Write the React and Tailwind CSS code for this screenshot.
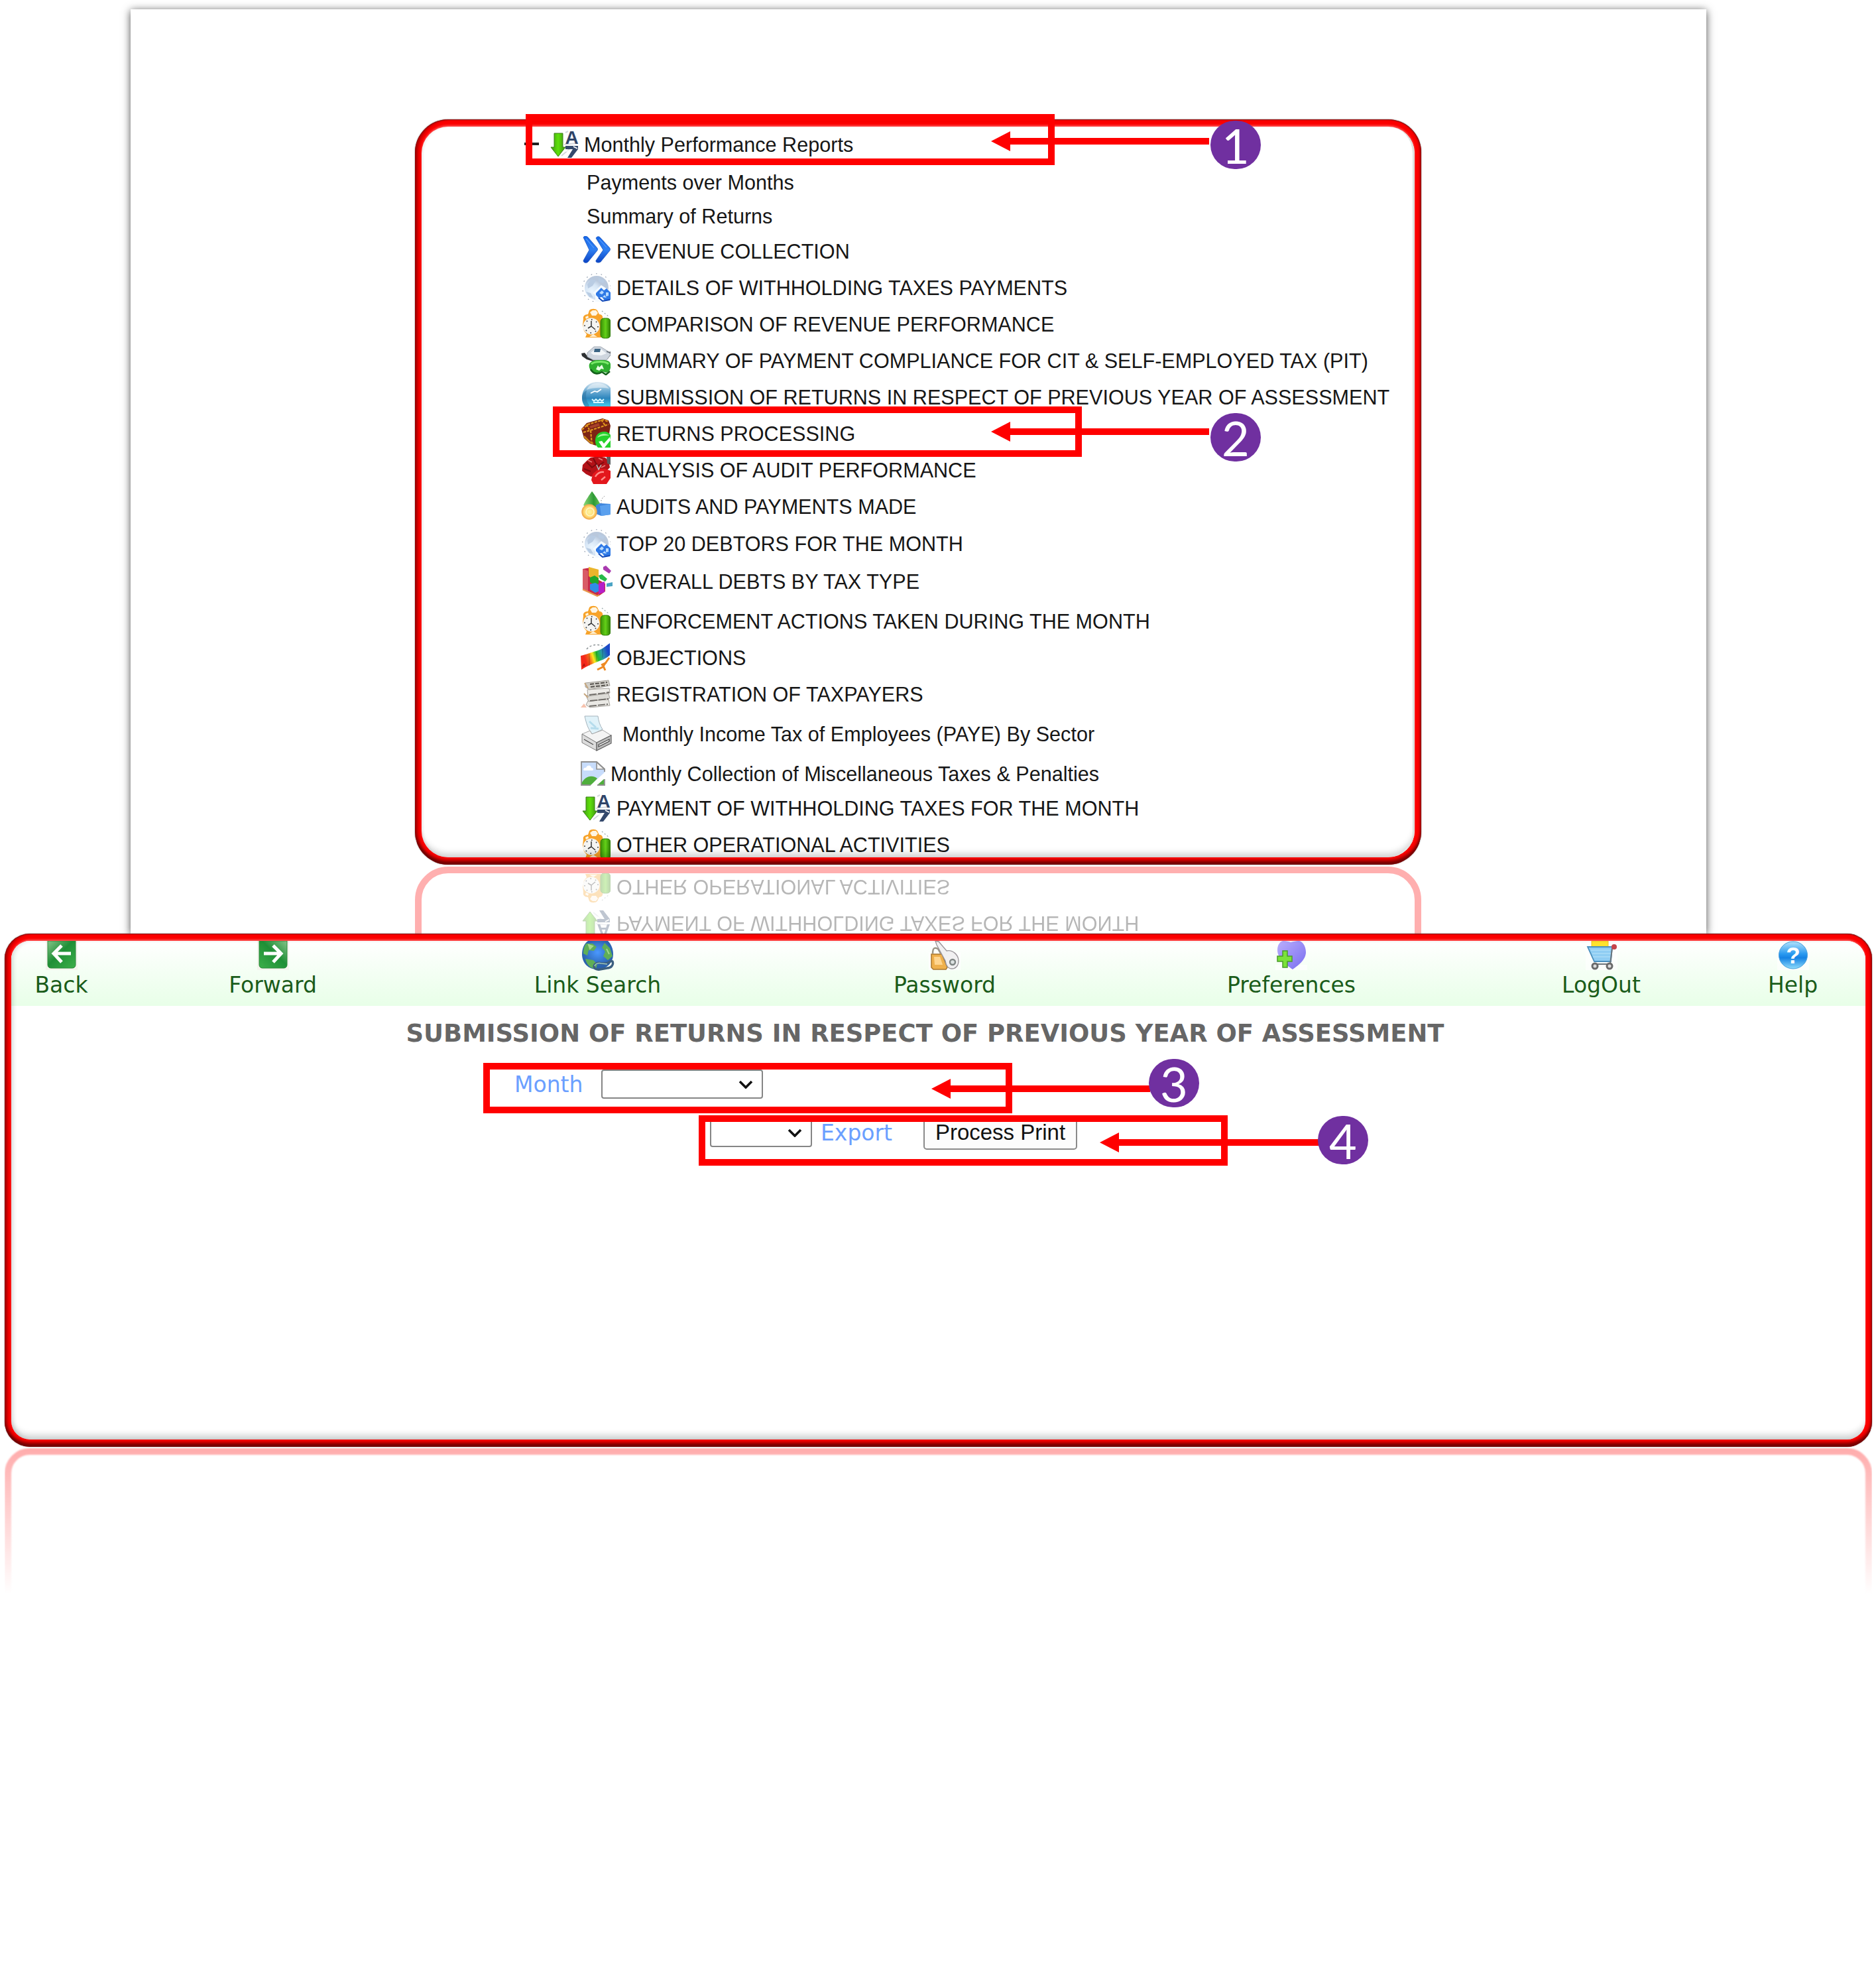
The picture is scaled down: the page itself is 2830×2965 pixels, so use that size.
import React from "react";

/* ---------- tree icons ---------- */

function SortIcon({ className = "w-11 h-11" }) {
  return (
    <svg viewBox="0 0 44 44" className={`overflow-visible ${className}`}>
      <defs>
        <linearGradient id="sortGreen" x1="0" x2="1">
          <stop offset="0" stopColor="#3f9a12" />
          <stop offset=".5" stopColor="#5fe00c" />
          <stop offset="1" stopColor="#3c8f10" />
        </linearGradient>
      </defs>
      <path d="M7 6h13v21h4L13 41 2 27h5z" fill="url(#sortGreen)" stroke="#3a7d1a" strokeWidth="1" />
      <path d="M22 23l18-2M18 40l14-12M24 5l4-2" stroke="#d5d8de" strokeWidth="2" fill="none" />
      <text x="23.5" y="22" fontSize="28" fontWeight="700" fontFamily="Liberation Sans, sans-serif" fill="#2f4468">A</text>
      <path d="M24 25h19v5L33 43h-6l8-13H24z" fill="#34496c" />
      <path d="M24 33l8-1M36 26l6 3" stroke="#fff" strokeWidth="1.5" />
    </svg>
  );
}

function ChevronsIcon() {
  return (
    <svg viewBox="0 0 44 44" className="w-11 h-11">
      <defs>
        <linearGradient id="chev" x1="0" y1="0" x2="0" y2="1">
          <stop offset="0" stopColor="#1667e8" />
          <stop offset=".5" stopColor="#2f80f2" />
          <stop offset="1" stopColor="#0b43c4" />
        </linearGradient>
      </defs>
      <g fill="url(#chev)" stroke="#1a55c0" strokeWidth=".8">
        <path d="M3 2c2-3 5-2 7 0l13 15c2 2 2 4 0 6L10 39c-2 2-7 2-7-2l9-16z" />
        <path d="M22 3c2-3 5-3 7 0l13 14c2 2 2 4 0 6L29 39c-3 2-8 1-7-2l11-16z" />
      </g>
      <path d="M7 4l12 14M27 5l11 12" stroke="#4b94fb" strokeWidth="1.5" fill="none" />
    </svg>
  );
}

function GlobeHomeIcon() {
  return (
    <svg viewBox="0 0 44 44" className="w-11 h-11">
      <defs>
        <radialGradient id="paleGlobe" cx=".3" cy=".65">
          <stop offset="0" stopColor="#eaf6ff" />
          <stop offset=".6" stopColor="#d6e5f5" />
          <stop offset="1" stopColor="#b9c8dc" />
        </radialGradient>
      </defs>
      <circle cx="23" cy="23" r="18" fill="url(#paleGlobe)" />
      <circle cx="23" cy="23" r="21.3" fill="none" stroke="#8794a6" strokeWidth="1.1" strokeDasharray="1.6 6" />
      <path d="M9 18l6-8 7 2-5 8-7 4zM26 8l9 4-2 4-7-2zM7 29l7 2 4 7-6-1z" fill="#b9cce3" />
      <path d="M17 31l13-12 14 9v16H21V34z" fill="#f4faff" />
      <path d="M22 31l8-8 4 4 4-3 6 6v11l-9 1-4-5-5 1-4-4z" fill="#2e79e6" />
      <path d="M27 31l4-4 3 3-3 3zM37 30l4 0 0 5-4 1zM32 37l3-3 3 4" fill="#b8dbff" />
      <path d="M26 38l6 5 11-2" stroke="#1249b8" strokeWidth="2" fill="none" />
    </svg>
  );
}

function ClockIcon() {
  return (
    <svg viewBox="0 0 44 46" className="w-11 h-[46px]">
      <defs>
        <linearGradient id="clockGreen" x1="0" x2="1">
          <stop offset="0" stopColor="#3a8f06" />
          <stop offset=".5" stopColor="#62d018" />
          <stop offset="1" stopColor="#2c7a04" />
        </linearGradient>
      </defs>
      <path d="M3 16c-1-4 2-7 7-7l2-6c3-3 9-3 12 0l3 6c4 0 6 3 5 7l-1 8 2 12-3 8H6l2-5-4-5-2-9z" fill="#f7a32a" />
      <path d="M13 6l4-3h5l3 4-3 4h-6zM6 13l4-2 1 3-4 2z" fill="#fff5e2" />
      <circle cx="15" cy="27" r="12.5" fill="#f4f4f2" />
      <circle cx="15" cy="27" r="10" fill="none" stroke="#444" strokeWidth="1.8" strokeDasharray="1.6 6.2" />
      <path d="M15 19v8l6 5M15 27l-5 3" stroke="#333" strokeWidth="1.5" fill="none" />
      <path d="M12 43l6-4 6 4z" fill="#fff0d2" />
      <rect x="29" y="15" width="15" height="30" rx="5" fill="url(#clockGreen)" stroke="#2f7d0a" strokeWidth="1" />
      <path d="M31 4l11 9" stroke="#9aa" strokeWidth="1.2" strokeDasharray="2 3" />
    </svg>
  );
}

function PhoneMoneyIcon() {
  return (
    <svg viewBox="0 0 44 46" className="w-11 h-[46px]">
      <path d="M0 13l5-1 4 5 12 6v3L8 22 1 17z" fill="#2e3133" />
      <path d="M40 12l4-2v6l-5 6z" fill="#4b5155" />
      <path d="M9 12L19 3h10l13 8 2 4-6 8H18L9 18z" fill="#cfd6df" stroke="#a0a8b2" strokeWidth="1" />
      <path d="M14 12l8-6 8 1 8 6-8 3-12-1z" fill="#f2f5f8" />
      <path d="M20 6h9l-1 5h-9z" fill="#3a6382" />
      <path d="M38 10l5 2" stroke="#666f78" strokeWidth="1.6" />
      <path d="M12 29c3-6 10-6 17-6s14 0 15 6c1 8-2 12-7 13l-6-2-7 4c-7-1-14-7-12-15z" fill="#2fae2f" />
      <path d="M15 29c5-4 20-5 26 0" stroke="#7bea6a" strokeWidth="3" fill="none" />
      <path d="M14 37c4 7 11 8 17 4l6 4 6-5" stroke="#14621b" strokeWidth="2.6" fill="none" />
      <path d="M22 37l3-6 2 3 4-4 3 7-4-1-3 3z" fill="#eaffe8" />
    </svg>
  );
}

function BlueOrbIcon() {
  return (
    <svg viewBox="0 0 44 46" className="w-11 h-[46px]">
      <defs>
        <linearGradient id="orb" x1="0" y1="0" x2="0" y2="1">
          <stop offset="0" stopColor="#dce9f3" />
          <stop offset=".3" stopColor="#6fadd4" />
          <stop offset=".55" stopColor="#2d86bd" />
          <stop offset=".85" stopColor="#45d4f2" />
        </linearGradient>
      </defs>
      <path d="M24 1c8 0 16 3 20 9v32c-5 4-12 4-19 4C12 46 1 38 1 25 1 11 11 1 24 1z" fill="url(#orb)" />
      <path d="M8 13C11 6 17 3 24 3s13 2 18 8c-8-2-26-2-34 2z" fill="#eef5fa" opacity=".55" />
      <path d="M1 24c0 8 3 14 8 18l3-6c-5-6-6-14-4-22-4 2-7 6-7 10z" fill="#2a6f9e" opacity=".5" />
      <path d="M14 18l6-3 4 1 6-4" stroke="#fff" strokeWidth="1.8" fill="none" />
      <path d="M16 27l3 3 3-3 3 3 3-3 3 3 3-3M18 32h16" stroke="#d8f7ff" strokeWidth="1.8" fill="none" />
    </svg>
  );
}

function ChestIcon() {
  return (
    <svg viewBox="0 0 44 46" className="w-11 h-[46px]">
      <path d="M0 17L8 8 32 1l9 3 3 8-2 12-20 18-9-3-9-8z" fill="#7d2414" />
      <path d="M1 18l9-8 23-7 8 3M3 22l14-4 24-8M14 19l2 22M8 10l4 8M30 3l6 9" stroke="#e0971e" strokeWidth="2.2" fill="none" strokeDasharray="4 1.6" />
      <path d="M12 13l14-5 2 4-14 4z" fill="#a8402a" />
      <path d="M4 28l8 8 6 3" stroke="#c9861c" strokeWidth="2.5" fill="none" />
      <path d="M21 34c0-8 6-13 13-13 5 0 8 2 10 5v19H25c-3-3-4-6-4-11z" fill="#25d12b" />
      <path d="M24 30c3-6 12-8 18-3-6-1-13 0-18 3z" fill="#a8f7a0" />
      <path d="M26 36l5-1 3 4 9-10 1 5-9 11h-3z" fill="#fff" />
    </svg>
  );
}

function RedIcon() {
  return (
    <svg viewBox="0 0 44 46" className="w-11 h-[46px]">
      <path d="M2 16l6-6 6-5 12-2 10 2 5 5 2 10-6 6-10 2-12 6-8-4-6-5z" fill="#b31218" />
      <path d="M38 4l6-4v16l-5-2z" fill="#5a5f60" />
      <path d="M8 12l8 8 8-6M18 6l6 12 10-6M4 22l10 4" stroke="#7d0b0f" strokeWidth="2" fill="none" />
      <path d="M10 9l6 3M26 6l6 3M30 20l6-3" stroke="#e87d7a" strokeWidth="1.6" />
      <path d="M17 30l9-8h10l8 3v11l-6 9H18l-3-6z" fill="#e3171c" />
      <path d="M21 34c3-5 8-8 13-7M30 39l6-5" stroke="#ff8f8a" strokeWidth="2.4" fill="none" />
      <path d="M23 16l3 7 4-7" stroke="#b9bfbd" strokeWidth="1.5" fill="none" />
    </svg>
  );
}

function ShapesIcon() {
  return (
    <svg viewBox="0 0 44 46" className="w-11 h-[46px]">
      <defs>
        <linearGradient id="cone" x1="0" x2="1">
          <stop offset="0" stopColor="#8fd879" />
          <stop offset=".6" stopColor="#2d9a35" />
          <stop offset="1" stopColor="#6bc45a" />
        </linearGradient>
        <radialGradient id="ball">
          <stop offset="0" stopColor="#fff3a0" />
          <stop offset=".7" stopColor="#ffdb74" />
          <stop offset="1" stopColor="#f3b04e" />
        </radialGradient>
      </defs>
      <path d="M16 1c2 2 10 14 13 20-3 6-21 6-26 1C6 15 13 5 16 1z" fill="url(#cone)" />
      <path d="M22 22l6-3 16 1v16l-14 2-8-3z" fill="#3f86dd" />
      <path d="M28 23l16-3v16l-14 2z" fill="#5aa0ee" />
      <path d="M31 12l4-4M30 14v5" stroke="#999" strokeWidth="1" strokeDasharray="2 2" />
      <circle cx="12" cy="32" r="11" fill="url(#ball)" stroke="#f1ad52" strokeWidth="1.5" />
      <circle cx="13" cy="32" r="6" fill="none" stroke="#fff6c8" strokeWidth="1.5" />
    </svg>
  );
}

function CubeIcon() {
  return (
    <svg viewBox="0 0 48 48" className="w-12 h-12">
      <path d="M2 6l12-2v12l22 12v12l-10 7L2 36z" fill="#c92a48" />
      <path d="M2 6l8 3v32l-8-4z" fill="#d95b66" />
      <path d="M11 3l15 4v13l-8 2-7-5z" fill="#eab52c" />
      <path d="M13 19l7-3 6 4v8l-7 2-6-4z" fill="#1fa62b" />
      <path d="M13 29l8-2 7 4v8l-7 3-8-5z" fill="#2f8ce8" />
      <path d="M26 28l9-3v16l-9 3z" fill="#b61fc8" />
      <path d="M26 16l5-2 8 7-3 4-8-4z" fill="#27b84a" />
      <path d="M33 3l4-2 8 8-3 4-9-6z" fill="#a93aaf" />
      <path d="M38 28l9-2v6l-9 1z" fill="#4aa3c4" />
      <path d="M2 37l22 10 3-2" stroke="#e8984a" strokeWidth="2" fill="none" />
    </svg>
  );
}

function FlagIcon() {
  return (
    <svg viewBox="0 0 46 44" className="w-[46px] h-11 -ml-0.5">
      <defs>
        <linearGradient id="rainbow" x1="0" x2="1" y1=".3" y2="0">
          <stop offset=".05" stopColor="#f3281a" />
          <stop offset=".2" stopColor="#f5661a" />
          <stop offset=".33" stopColor="#ffe81c" />
          <stop offset=".47" stopColor="#22bd2c" />
          <stop offset=".64" stopColor="#2a9aa8" />
          <stop offset=".85" stopColor="#1c48c8" />
        </linearGradient>
      </defs>
      <path d="M10 10C16 3 26 2 34 5" stroke="#8d9496" strokeWidth="1.5" strokeDasharray="3 3" fill="none" />
      <path d="M1 20c9-2 15-5 23-7S38 6 45 1v18c-6 6-14 8-21 11S11 35 2 41z" fill="url(#rainbow)" />
      <path d="M14 17v18M25 14v14M34 10v13" stroke="#00000033" strokeWidth="1.4" />
      <path d="M44 23L34 37l-8 4M34 33l4 9M40 30l-8 4" stroke="#ee8a22" strokeWidth="3" fill="none" />
      <path d="M3 37l3-6 2 4" fill="#b3150c" />
    </svg>
  );
}

function PapersIcon() {
  return (
    <svg viewBox="0 0 46 44" className="w-[46px] h-11 -ml-0.5">
      <g stroke="#a5a29c" strokeWidth="1">
        <path d="M12 33l31-2 2 9-30 3-6-4z" fill="#e9e8e4" />
        <path d="M9 25l34-3 2 7-32 5z" fill="#dddcd7" />
        <path d="M11 16l33-2 1 7-33 5z" fill="#eeede9" />
        <path d="M8 6l35-4 2 8-31 6-6-4z" fill="#d2d0ca" />
      </g>
      <path d="M15 8l26-3M16 12l26-3" stroke="#55524d" strokeWidth="2" strokeDasharray="6 2" />
      <path d="M14 24l30-4M15 33l28-3M14 41l28-3" stroke="#6d6a66" strokeWidth="1.8" strokeDasharray="11 2" />
      <path d="M7 6l5 8M6 22l6 6" stroke="#c7a77e" strokeWidth="2" />
      <path d="M1 43l5-6 4 6z" fill="#f6c3ae" />
    </svg>
  );
}

function PrinterIcon() {
  return (
    <svg viewBox="0 0 48 54" className="w-12 h-[54px]">
      <path d="M5 1h20c1 8 3 14 7 20l-15 7C10 22 7 10 5 1z" fill="#e0f2f9" stroke="#a4b3bc" strokeWidth="1" />
      <path d="M12 9l10 9M14 19l12 1" stroke="#b5dcec" strokeWidth="3" />
      <path d="M1 28l12-5 3 5 16-6 13 8-22 11z" fill="#f4f4f4" stroke="#a5a5a5" strokeWidth="1" />
      <path d="M1 28l22 13v12L1 41z" fill="#dcdcdc" stroke="#808080" strokeWidth="1" />
      <path d="M45 30L23 41v12l22-11z" fill="#bdbdbd" stroke="#5c5c5c" strokeWidth="1.2" />
      <path d="M26 44l16-8v3l-16 8zM4 36l14 8" stroke="#4d4d4d" strokeWidth="1.3" fill="#f5f5f5" />
    </svg>
  );
}

function BrokenImageIcon() {
  return (
    <svg viewBox="0 0 37 37" className="w-[37px] h-[37px] -ml-px">
      <path d="M1 1h23l12 11v24H1z" fill="#c7dcfb" />
      <path d="M4 13c0-3 3-4 4-3 2-5 8-4 8 0 3 0 4 3 2 4H5z" fill="#fff" />
      <path d="M1 34c4-10 15-15 24-8l-9 10H1z" fill="#4fae3c" />
      <path d="M37 16L14 37h12l11-10z" fill="#fff" />
      <path d="M26 35l9-8v8z" fill="#4fae3c" />
      <path d="M24 1v11h12z" fill="#f4f4f4" stroke="#8f8f8f" strokeWidth="1.6" />
      <path d="M36 16v-4L24 1H1v35h14M25 36h11v-9" fill="none" stroke="#8f8f8f" strokeWidth="1.8" />
    </svg>
  );
}

/* ---------- toolbar icons ---------- */

function ArrowTile({ flip }) {
  return (
    <svg viewBox="0 0 48 44" className={flip ? "w-12 h-11 -scale-x-100" : "w-12 h-11"}>
      <defs>
        <linearGradient id="tile" x1="0" y1="0" x2="1" y2="1">
          <stop offset="0" stopColor="#86c48a" />
          <stop offset=".45" stopColor="#1f8f36" />
          <stop offset="1" stopColor="#3db04a" />
        </linearGradient>
      </defs>
      <path d="M0 0h48v44H0z" fill="#f3f1ea" opacity=".7" />
      <path d="M3 0h42v36c0 3-2 5-5 5H8c-3 0-5-2-5-5z" fill="url(#tile)" stroke="#2d8a3c" strokeWidth="1" />
      <path d="M38 19H14M24 7L12 19l12 13" fill="none" stroke="#fff" strokeWidth="5" />
    </svg>
  );
}

function EarthLinkIcon() {
  return (
    <svg viewBox="0 0 50 46" className="w-[50px] h-[46px]">
      <defs>
        <radialGradient id="earth" cx=".5" cy=".4">
          <stop offset="0" stopColor="#4a98ff" />
          <stop offset="1" stopColor="#2a62ad" />
        </radialGradient>
      </defs>
      <path d="M10 0h30c5 5 8 12 8 20 0 13-10 23-24 23S1 33 1 20C1 12 4 4 10 0z" fill="url(#earth)" />
      <path d="M7 4h10l6 5-4 6-8-1-2 8-6-3c0-6 1-11 4-15zM35 3l8 8 4 12-7 6-7-6 3-7-5-6zM6 27l12 2 6 6-2 7C14 42 8 36 6 27z" fill="#5fae57" />
      <path d="M11 6l6 2-4 4zM38 12l4 8" stroke="#a4d78c" strokeWidth="2" fill="#a4d78c" />
      <path d="M19 38c1-4 6-6 11-4h8c4-1 6-5 9-3 2 5-2 10-8 10l-11 2c-5 1-9-1-9-5z" fill="none" stroke="#3c5f80" strokeWidth="3.4" />
      <path d="M20 38c1-4 6-5 10-4l9 1" fill="none" stroke="#9cc6c0" strokeWidth="1.5" />
    </svg>
  );
}

function LockKeyIcon() {
  return (
    <svg viewBox="0 0 48 44" className="w-12 h-11">
      <path d="M0 17h48v27H0z" fill="#fff" opacity=".7" />
      <path d="M6 19c0-10 4-9 8-7l4 7" fill="none" stroke="#9b9587" strokeWidth="2.5" />
      <path d="M4 20h16l8 20-2 3H7l-3-3z" fill="#efb04c" stroke="#a9762d" strokeWidth="1.5" />
      <path d="M8 24h9l4 12H9z" fill="#ffd58e" />
      <path d="M10 0l5 1 12 14c9-2 18 6 18 15 0 8-5 12-10 12-7 0-9-6-10-12L12 6z" fill="#f1f0f1" stroke="#9c979c" strokeWidth="1.4" />
      <circle cx="36" cy="32" r="4" fill="#dde2e2" stroke="#7f8584" strokeWidth="2.4" />
    </svg>
  );
}

function HeartPlusIcon() {
  return (
    <svg viewBox="0 0 48 44" className="w-12 h-11">
      <defs>
        <linearGradient id="heart" x1="0" y1="0" x2="1" y2="1">
          <stop offset="0" stopColor="#b9aefc" />
          <stop offset="1" stopColor="#7a6df0" />
        </linearGradient>
      </defs>
      <path d="M0 36h48v8H0z" fill="#fff" opacity=".7" />
      <path d="M3 14C3 5 8 0 12 0c5 0 8 1 11 2 4-1 8-2 12-2 5 0 11 7 11 17 0 12-13 21-20 26C16 36 3 26 3 14z" fill="url(#heart)" />
      <path d="M11 15h7v8h7v8h-7v9h-7v-9H3v-8h8z" fill="#7be23a" stroke="#4b9a2c" strokeWidth="1.5" />
    </svg>
  );
}

function CartIcon() {
  return (
    <svg viewBox="0 0 48 44" className="w-12 h-11">
      <path d="M0 8h48v36H0z" fill="#fff" opacity=".6" />
      <path d="M9 0h25v9H9z" fill="#ffe22e" stroke="#f0c023" strokeWidth="1" />
      <path d="M3 9h37l-2 22H13z" fill="#8fcdf3" stroke="#4a8fbd" strokeWidth="1.8" />
      <path d="M8 14h30M10 19h28M11 24h26" stroke="#b9e3fa" strokeWidth="1.2" />
      <path d="M44 8l-4 3-3 24H12" fill="none" stroke="#6d757b" strokeWidth="2" />
      <circle cx="43" cy="9" r="4" fill="#c5434a" />
      <circle cx="14" cy="38" r="4" fill="#ddd" stroke="#6a6a6a" strokeWidth="3" />
      <circle cx="36" cy="38" r="4" fill="#ddd" stroke="#6a6a6a" strokeWidth="3" />
    </svg>
  );
}

function HelpIcon() {
  return (
    <svg viewBox="0 0 48 44" className="w-12 h-11">
      <defs>
        <linearGradient id="help" x1="0" y1="0" x2="0" y2="1">
          <stop offset="0" stopColor="#b4e3fb" />
          <stop offset=".45" stopColor="#2a9af0" />
          <stop offset=".6" stopColor="#1583e4" />
          <stop offset="1" stopColor="#8fdcfb" />
        </linearGradient>
      </defs>
      <path d="M0 22h48v22H0z" fill="#fff" opacity=".6" />
      <ellipse cx="24" cy="21.5" rx="21.5" ry="20.5" fill="url(#help)" stroke="#4aa0dc" strokeWidth="1" />
      <text x="24" y="34" fontSize="35" fontWeight="700" textAnchor="middle" fontFamily="Liberation Sans, sans-serif" fill="#fff">?</text>
    </svg>
  );
}

/* ---------- building blocks ---------- */

const REPORTS = [
  { label: "REVENUE COLLECTION", Icon: ChevronsIcon, gap: "mt-[9px]" },
  { label: "DETAILS OF WITHHOLDING TAXES PAYMENTS", Icon: GlobeHomeIcon, gap: "mt-[11px]" },
  { label: "COMPARISON OF REVENUE PERFORMANCE", Icon: ClockIcon, gap: "mt-[11px]" },
  { label: "SUMMARY OF PAYMENT COMPLIANCE FOR CIT & SELF-EMPLOYED TAX (PIT)", Icon: PhoneMoneyIcon, gap: "mt-[11px]" },
  { label: "SUBMISSION OF RETURNS IN RESPECT OF PREVIOUS YEAR OF ASSESSMENT", Icon: BlueOrbIcon, gap: "mt-[11px]" },
  { label: "RETURNS PROCESSING", Icon: ChestIcon, gap: "mt-[11px]" },
  { label: "ANALYSIS OF AUDIT PERFORMANCE", Icon: RedIcon, gap: "mt-[11px]" },
  { label: "AUDITS AND PAYMENTS MADE", Icon: ShapesIcon, gap: "mt-[11px]" },
  { label: "TOP 20 DEBTORS FOR THE MONTH", Icon: GlobeHomeIcon, gap: "mt-[12px]" },
  { label: "OVERALL DEBTS BY TAX TYPE", Icon: CubeIcon, gap: "mt-[13px]", text: "ml-[10px]" },
  { label: "ENFORCEMENT ACTIONS TAKEN DURING THE MONTH", Icon: ClockIcon, gap: "mt-[16px]" },
  { label: "OBJECTIONS", Icon: FlagIcon, gap: "mt-[11px]" },
  { label: "REGISTRATION OF TAXPAYERS", Icon: PapersIcon, gap: "mt-[11px]" },
  { label: "Monthly Income Tax of Employees (PAYE) By Sector", Icon: PrinterIcon, gap: "mt-[16px]", text: "ml-[14px]" },
  { label: "Monthly Collection of Miscellaneous Taxes & Penalties", Icon: BrokenImageIcon, gap: "mt-[16px]", text: "ml-2" },
  { label: "PAYMENT OF WITHHOLDING TAXES FOR THE MONTH", Icon: SortIcon, gap: "mt-[8px]" },
  { label: "OTHER OPERATIONAL ACTIVITIES", Icon: ClockIcon, gap: "mt-[11px]" },
];

function ReportRow({ item }) {
  const { Icon } = item;
  return (
    <div className={`flex h-11 shrink-0 items-center pl-[241px] ${item.gap}`}>
      <Icon />
      <span className={`pt-[2px] ${item.text || "ml-[9px]"}`}>{item.label}</span>
    </div>
  );
}

function GlossyFrame({ className, inner, children }) {
  return (
    <div
      className={`bg-[#fb0000] px-[10px] pt-[11px] pb-[11px] shadow-[0_0_2px_rgba(60,60,60,0.7),inset_0_-7px_5px_-1px_rgba(80,0,0,0.8),inset_5px_0_4px_-1px_rgba(90,0,0,0.5),inset_-4px_0_3px_-2px_rgba(90,0,0,0.5),inset_0_1px_1px_rgba(90,40,40,0.6)] ${className}`}
    >
      <div
        className={`flex h-full flex-col overflow-hidden bg-white shadow-[0_-2px_3px_0_rgba(255,110,110,0.75)] ${inner}`}
      >
        {children}
      </div>
    </div>
  );
}

function Callout({ n, box, line, badge }) {
  return (
    <>
      <div className={`absolute border-[10px] border-[#ff0000] ${box}`} />
      <div className={`absolute flex h-[30px] items-center ${line}`}>
        <svg viewBox="0 0 29 30" className="h-[30px] w-[29px] shrink-0">
          <path d="M0 15L29 0v30z" fill="#ff0000" />
        </svg>
        <div className="h-[10px] flex-1 bg-[#ff0000]" />
      </div>
      <div
        className={`absolute flex h-[73px] w-[76px] items-center justify-center rounded-full bg-[#7030a0] pt-[2px] font-['Lato',sans-serif] text-[72px] leading-[73px] text-white ${badge}`}
      >
        {n}
      </div>
    </>
  );
}

function SelectBox({ className }) {
  return (
    <div className={`flex h-11 items-center justify-end rounded-[4px] border-2 border-[#858585] bg-white pr-[13px] ${className}`}>
      <svg viewBox="0 0 22 13" className="h-[13px] w-[22px]">
        <path d="M2 2l9 9 9-9" fill="none" stroke="#111" strokeWidth="3.6" />
      </svg>
    </div>
  );
}

const TOOLS = [
  { label: "Back", icon: <ArrowTile />, w: "w-[151px]" },
  { label: "Forward", icon: <ArrowTile flip />, w: "w-[487px]" },
  { label: "Link Search", icon: <EarthLinkIcon />, w: "w-[493px]" },
  { label: "Password", icon: <LockKeyIcon />, w: "w-[554px]" },
  { label: "Preferences", icon: <HeartPlusIcon />, w: "w-[492px]" },
  { label: "LogOut", icon: <CartIcon />, w: "w-[443px]" },
  { label: "Help", icon: <HelpIcon />, w: "w-[135px]" },
];

export default function App() {
  return (
    <div className="relative h-[2965px] w-[2830px] overflow-hidden bg-white pt-[14px]">
      {/* Sheet with the report tree */}
      <div className="ml-[197px] flex h-[1394px] w-[2377px] flex-col bg-white pt-[166px] pl-[429px] font-['Liberation_Sans',Arial,sans-serif] text-[30.58px] leading-[44px] whitespace-nowrap text-[#161616] shadow-[0_2px_12px_rgba(0,0,0,0.7)]">
        <GlossyFrame className="h-[1124px] w-[1518px] shrink-0 rounded-[50px]" inner="rounded-[40px] relative">
          <div className="mt-1 flex h-11 shrink-0 items-center pl-[155px]">
            <div className="h-[4px] w-[22px] bg-[#222]" />
            <SortIcon className="ml-4 h-11 w-11" />
            <span className="ml-2 pt-[2px]">Monthly Performance Reports</span>
          </div>
          <div className="mt-[14px] h-11 shrink-0 pl-[249px]">Payments over Months</div>
          <div className="mt-[7px] h-11 shrink-0 pl-[249px]">Summary of Returns</div>
          <div className="-mt-px flex flex-col">
            {REPORTS.map((r) => (
              <ReportRow key={r.label} item={r} />
            ))}
          </div>
          <div className="absolute inset-0 rounded-[40px] border-r-[3px] border-[#dfe2df] shadow-[inset_0_-12px_10px_-6px_rgba(0,0,0,0.18),inset_3px_0_3px_rgba(0,0,0,0.05)]" />
        </GlossyFrame>

        {/* Mirror image fading out below the frame */}
        <div className="mt-[3px] h-[101px] w-[1518px] overflow-hidden" aria-hidden="true">
          <div className="h-[300px] -scale-y-100 opacity-[0.31] blur-[0.6px]">
            <div className="flex h-full flex-col justify-end overflow-hidden rounded-[50px] border-[10px] border-[#ff0000]">
              {REPORTS.slice(-2).map((r) => (
                <ReportRow key={r.label} item={r} />
              ))}
            </div>
          </div>
        </div>
      </div>

      {/* Report form */}
      <GlossyFrame className="relative ml-[7px] h-[774px] w-[2817px] rounded-[38px]" inner="rounded-[28px] font-['DejaVu_Sans',Verdana,sans-serif] text-[33px] relative">
        <div className="flex h-[98px] shrink-0 bg-linear-to-b from-white to-[#e8ffe8] text-[#1a5c1a]">
          {TOOLS.map((t) => (
            <div key={t.label} className={`flex flex-col items-center whitespace-nowrap ${t.w}`}>
              <div className="flex h-[45px] items-start">{t.icon}</div>
              <div className="h-11 leading-[44px]">{t.label}</div>
            </div>
          ))}
        </div>
        <h1 className="mt-[18px] h-12 shrink-0 pr-10 text-center text-[36.9px] leading-[48px] font-bold whitespace-nowrap text-[#666]">
          SUBMISSION OF RETURNS IN RESPECT OF PREVIOUS YEAR OF ASSESSMENT
        </h1>
        <div className="mt-[30px] flex h-11 shrink-0 items-center pl-[759px] text-[#6b9fff]">
          <span className="pt-[2px]">Month</span>
          <SelectBox className="ml-7 w-[244px]" />
        </div>
        <div className="mt-[25px] flex h-[52px] shrink-0 items-center pl-[1054px] text-[#6b9fff]">
          <SelectBox className="w-[154px]" />
          <span className="ml-[13px] pt-px">Export</span>
          <button className="ml-[47px] h-[52px] w-[232px] rounded-[5px] border-2 border-[#8a8a8a] bg-[#fcfcfc] font-['Liberation_Sans',Arial,sans-serif] text-[33px] leading-[48px] whitespace-nowrap text-[#111]">
            Process Print
          </button>
        </div>
        <div className="pointer-events-none absolute inset-0 rounded-[28px] shadow-[inset_0_-12px_10px_-5px_rgba(0,20,20,0.18),inset_5px_0_6px_-2px_rgba(0,40,40,0.15)]" />
      </GlossyFrame>
      <div className="mt-[2px] ml-[7px] h-[220px] w-[2817px] mask-b-from-0% mask-b-to-100% blur-[0.8px]">
        <div className="h-[300px] rounded-[38px] border-[10px] border-[#ffacac]" />
      </div>

      {/* Step markers */}
      <Callout n="1" box="left-[793px] top-[172px] h-[77px] w-[798px]" line="left-[1495px] top-[198px] w-[329px]" badge="left-[1826px] top-[182px]" />
      <Callout n="2" box="left-[834px] top-[613px] h-[76px] w-[798px]" line="left-[1495px] top-[636px] w-[329px]" badge="left-[1826px] top-[623px]" />
      <Callout n="3" box="left-[729px] top-[1603px] h-[76px] w-[798px]" line="left-[1405px] top-[1627px] w-[330px]" badge="left-[1733px] top-[1597px]" />
      <Callout n="4" box="left-[1054px] top-[1682px] h-[76px] w-[798px]" line="left-[1659px] top-[1708px] w-[330px]" badge="left-[1988px] top-[1683px]" />
    </div>
  );
}
